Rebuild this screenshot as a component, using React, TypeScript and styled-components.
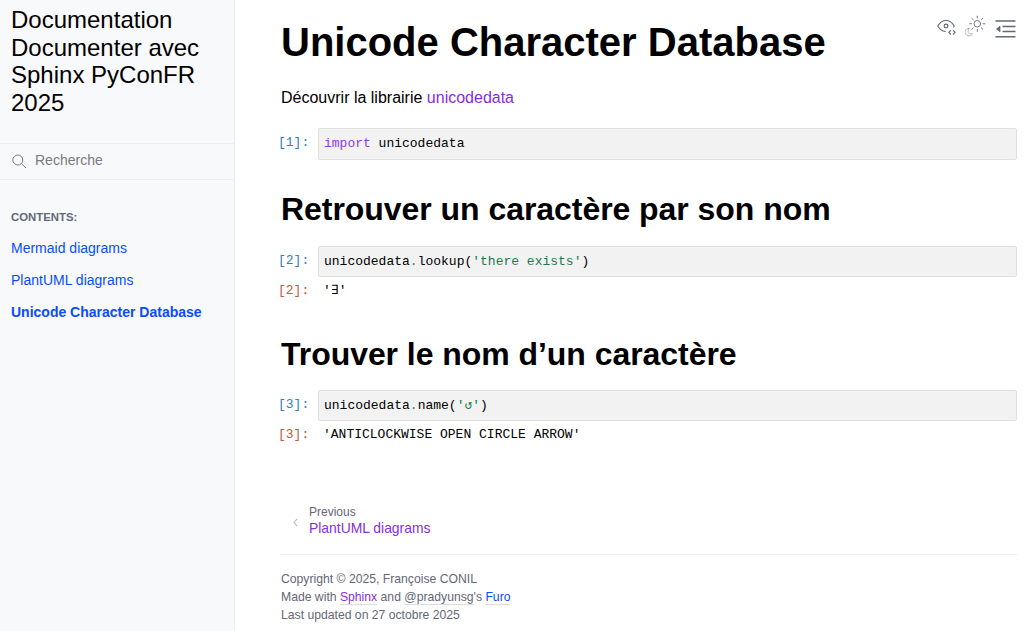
import styled, { createGlobalStyle } from 'styled-components'

const GlobalStyle = createGlobalStyle`
  html, body {
    margin: 0;
    height: 100%;
    overflow: hidden;
    background: #fff;
  }
  body {
    text-rendering: optimizeLegibility;
  }
  #root {
    height: 100%;
  }
`

const Page = styled.div`
  display: flex;
  height: 631px;
  font-family: "Liberation Sans", Arial, sans-serif;
  font-size: 16px;
  color: #000;
`

const Sidebar = styled.aside`
  width: 234px;
  flex-shrink: 0;
  background: #f8f9fb;
  border-right: 1px solid #eeeeee;
`

const Brand = styled.div`
  padding: 6.2px 11px 0;
  height: 136.8px;
  font-size: 24px;
  line-height: 27.6px;
  color: #000;
`

const SearchBox = styled.div`
  display: flex;
  align-items: center;
  height: 35px;
  padding-left: 12px;
  gap: 8px;
  border-top: 1px solid #eeeeee;
  border-bottom: 1px solid #eeeeee;
  font-size: 14px;
  color: #7a7a80;
`

const SearchText = styled.span`
  padding-bottom: 3px;
`

const Caption = styled.div`
  margin: 30px 0 0;
  padding-left: 11px;
  font-size: 11.375px;
  line-height: 15px;
  font-weight: 700;
  color: #646776;
`

const TocList = styled.ul`
  list-style: none;
  margin: 7px 0 0;
  padding: 0;
`

const TocItem = styled.li<{ $current?: boolean }>`
  padding: 0 11px;
  height: 32px;
  line-height: 32px;
  font-size: 14px;
  color: #0a4bff;
  font-weight: ${(p) => (p.$current ? 700 : 400)};
`

const Main = styled.main`
  position: relative;
  flex: 1;
  padding: 0 17px 0 46px;
`

const IconBar = styled.div`
  position: absolute;
  top: 15px;
  right: 17px;
  display: flex;
  align-items: flex-start;
  gap: 7px;
  color: #646776;
`

const IconSvg = styled.svg`
  display: block;
  fill: none;
  stroke: currentColor;
  stroke-linecap: round;
  stroke-linejoin: round;
`

const TocSvg = styled(IconSvg)`
  margin-left: 2px;
  stroke-linecap: butt;
`

const Title = styled.h1`
  margin: 0;
  padding-top: 17px;
  font-size: 40px;
  line-height: 50px;
  font-weight: 700;
`

const Lead = styled.p`
  margin: 19px 0 0;
  font-size: 16px;
  line-height: 24px;
`

const Visited = styled.span`
  color: #872ee0;
`

const SectionTitle = styled.h2`
  margin: 30px 0 0;
  font-size: 32px;
  line-height: 38px;
  font-weight: 700;
  letter-spacing: -0.05px;
`

const Cell = styled.div<{ $mt: number; $mb?: number }>`
  display: flex;
  align-items: flex-start;
  margin-top: ${(p) => p.$mt}px;
  margin-bottom: ${(p) => p.$mb ?? 0}px;
  font-family: "Liberation Mono", "DejaVu Sans Mono", monospace;
  font-size: 13px;
  line-height: 15px;
`

const Prompt = styled.div<{ $out?: boolean }>`
  width: 38px;
  margin-left: -3px;
  padding-top: ${(p) => (p.$out ? 0 : 7)}px;
  flex-shrink: 0;
  color: ${(p) => (p.$out ? '#bf5b3d' : '#307fc1')};
`

const Input = styled.pre`
  flex: 1;
  margin: 0 0 0 2px;
  padding: 7.25px 5px;
  font: inherit;
  background: #f2f2f2;
  border: 1px solid #e0e0e0;
  border-radius: 2px;
`

const Output = styled.pre`
  margin: 0 0 0 7px;
  font: inherit;
`

const Kw = styled.span`
  color: #9138e5;
`

const Op = styled.span`
  color: #666;
`

const Str = styled.span`
  color: #1a7a4a;
`

const Pager = styled.div`
  display: flex;
  align-items: center;
  gap: 11px;
  margin-top: 63.5px;
  padding-left: 12px;
  padding-bottom: 15.5px;
  border-bottom: 1px solid #eeeeee;
`

const Chevron = styled.svg`
  margin-top: 2px;
  fill: none;
  stroke: #bbbbbb;
  stroke-width: 1.1;
`

const PagerText = styled.div`
  display: flex;
  flex-direction: column;
`

const PagerLabel = styled.span`
  font-size: 12px;
  line-height: 14px;
  color: #646776;
`

const PagerLink = styled.span`
  font-size: 13.9px;
  line-height: 19px;
  color: #872ee0;
`

const Footer = styled.footer`
  margin-top: 15px;
  font-size: 12.2px;
  line-height: 18px;
  color: #646776;
`

const FootLink = styled.span<{ $visited?: boolean }>`
  color: ${(p) => (p.$visited ? '#872ee0' : '#0a4bff')};
  border-bottom: 1px solid #dddddd;
`

const PlainUnderline = styled.span`
  border-bottom: 1px solid #dddddd;
`

function SearchIcon() {
  return (
    <svg width="15" height="15" viewBox="0 0 15 15" fill="none" stroke="#6b6b6b" strokeWidth="0.9">
      <circle cx="5.8" cy="6" r="5" />
      <path d="M9.5 9.7 L14 14" />
    </svg>
  )
}

// eye with code brackets, "view source"
function EyeIcon() {
  return (
    <IconSvg width="22" height="22" viewBox="0 0 24 24" strokeWidth="1.25">
      <path d="M10 12a2 2 0 1 0 4 0a2 2 0 0 0 -4 0" />
      <path d="M11.11 17.958c-3.209 -.307 -5.91 -2.293 -8.11 -5.958c2.4 -4 5.4 -6 9 -6c3.6 0 6.6 2 9 6c-.21 .352 -.427 .688 -.647 1.008" />
      <path d="M20 21l2 -2l-2 -2" />
      <path d="M17 17l-2 2l2 2" />
    </IconSvg>
  )
}

function SunMoonIcon() {
  return (
    <IconSvg width="22" height="22" viewBox="0 0 24 24" strokeWidth="1">
      <path
        opacity="0.5"
        d="M 5.411 14.504 C 5.471 14.504 5.532 14.504 5.591 14.504 C 3.639 16.319 4.383 19.569 6.931 20.352 C 7.693 20.586 8.512 20.551 9.25 20.252 C 8.023 23.207 4.056 23.725 2.11 21.184 C 0.166 18.642 1.702 14.949 4.874 14.536 C 5.051 14.512 5.231 14.5 5.411 14.5 L 5.411 14.504 Z"
      />
      <path d="M14.5 3.25V1.25 M14.5 15.85V17.85 M10.044 5.094L8.63 3.68 M19 14.05L20.414 15.464 M8.2 9.55H6.2 M20.8 9.55H22.8 M10.044 14.006L8.63 15.42 M19 5.05L20.414 3.636" />
      <circle cx="14.5" cy="9.55" r="3.6" />
    </IconSvg>
  )
}

function TocIcon() {
  return (
    <TocSvg width="22" height="24" viewBox="0 0 22 24" strokeWidth="1.5">
      <path d="M0.5 6H20.5 M7.5 11.5H20.5 M7.5 16.5H20.5 M0.5 21.7H20.5" />
      <path d="M5 11.2 L1.5 14 L5 16.8 Z" fill="currentColor" strokeWidth="0.8" />
    </TocSvg>
  )
}

export default function App() {
  return (
    <>
      <GlobalStyle />
      <Page>
        <Sidebar>
          <Brand>Documentation Documenter avec Sphinx PyConFR 2025</Brand>
          <SearchBox>
            <SearchIcon />
            <SearchText>Recherche</SearchText>
          </SearchBox>
          <Caption>CONTENTS:</Caption>
          <TocList>
            <TocItem>Mermaid diagrams</TocItem>
            <TocItem>PlantUML diagrams</TocItem>
            <TocItem $current>Unicode Character Database</TocItem>
          </TocList>
        </Sidebar>
        <Main>
          <IconBar>
            <EyeIcon />
            <SunMoonIcon />
            <TocIcon />
          </IconBar>
          <Title>Unicode Character Database</Title>
          <Lead>
            Découvrir la librairie <Visited>unicodedata</Visited>
          </Lead>
          <Cell $mt={18}>
            <Prompt>[1]:</Prompt>
            <Input>
              <Kw>import</Kw> unicodedata
            </Input>
          </Cell>
          <SectionTitle>Retrouver un caractère par son nom</SectionTitle>
          <Cell $mt={18.1}>
            <Prompt>[2]:</Prompt>
            <Input>
              unicodedata<Op>.</Op>lookup(<Str>'there exists'</Str>)
            </Input>
          </Cell>
          <Cell $mt={5.9} $mb={36.6}>
            <Prompt $out>[2]:</Prompt>
            <Output>'∃'</Output>
          </Cell>
          <SectionTitle>Trouver le nom d’un caractère</SectionTitle>
          <Cell $mt={17}>
            <Prompt>[3]:</Prompt>
            <Input>
              unicodedata<Op>.</Op>name(<Str>'↺'</Str>)
            </Input>
          </Cell>
          <Cell $mt={5.9}>
            <Prompt $out>[3]:</Prompt>
            <Output>'ANTICLOCKWISE OPEN CIRCLE ARROW'</Output>
          </Cell>
          <Pager>
            <Chevron width="5" height="9" viewBox="0 0 5 9">
              <path d="M4.2 0.8 L1 4.5 L4.2 8.2" />
            </Chevron>
            <PagerText>
              <PagerLabel>Previous</PagerLabel>
              <PagerLink>PlantUML diagrams</PagerLink>
            </PagerText>
          </Pager>
          <Footer>
            <div>Copyright © 2025, Françoise CONIL</div>
            <div>
              Made with <FootLink $visited>Sphinx</FootLink> and <PlainUnderline>@pradyunsg</PlainUnderline>'s{' '}
              <FootLink>Furo</FootLink>
            </div>
            <div>Last updated on 27 octobre 2025</div>
          </Footer>
        </Main>
      </Page>
    </>
  )
}
